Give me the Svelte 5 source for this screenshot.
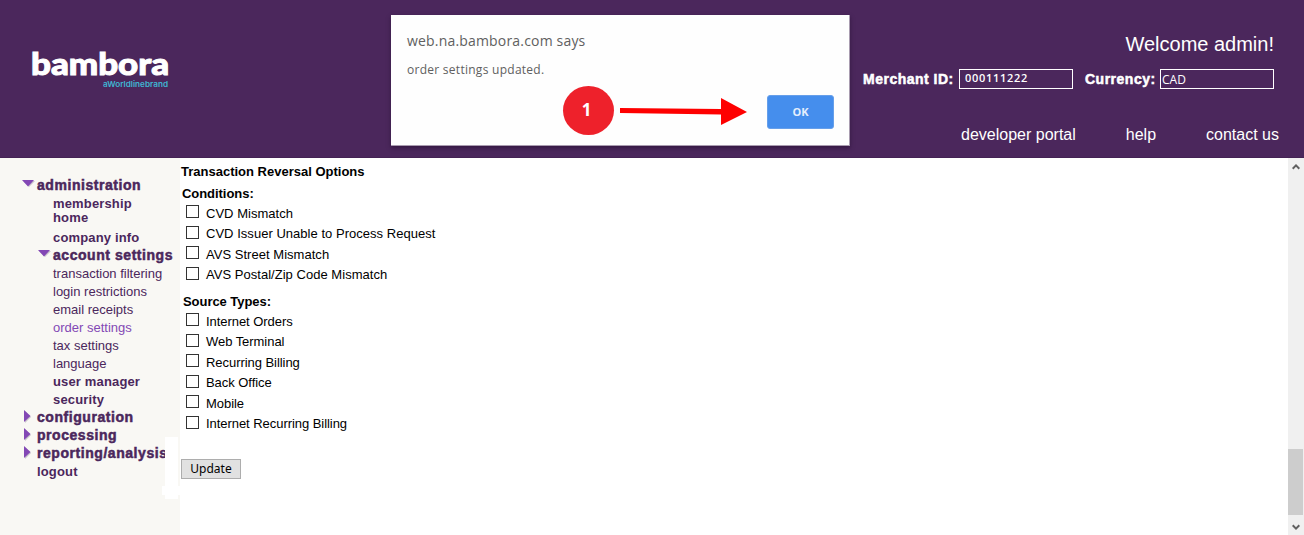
<script>
    const conditions = [
        'CVD Mismatch',
        'CVD Issuer Unable to Process Request',
        'AVS Street Mismatch',
        'AVS Postal/Zip Code Mismatch'
    ];

    const sourceTypes = [
        'Internet Orders',
        'Web Terminal',
        'Recurring Billing',
        'Back Office',
        'Mobile',
        'Internet Recurring Billing'
    ];

    const menu = [
        { label: 'administration', type: 'section', arrow: 'down' },
        { label: 'membership home', type: 'item wrap' },
        { label: 'company info', type: 'item' },
        { label: 'account settings', type: 'section nested', arrow: 'down' },
        { label: 'transaction filtering', type: 'sub' },
        { label: 'login restrictions', type: 'sub' },
        { label: 'email receipts', type: 'sub' },
        { label: 'order settings', type: 'sub active' },
        { label: 'tax settings', type: 'sub' },
        { label: 'language', type: 'sub' },
        { label: 'user manager', type: 'item' },
        { label: 'security', type: 'item' },
        { label: 'configuration', type: 'section', arrow: 'right' },
        { label: 'processing', type: 'section', arrow: 'right' },
        { label: 'reporting/analysis', type: 'section', arrow: 'right' },
        { label: 'logout', type: 'item outer' }
    ];

    let showDialog = true;

    function closeDialog() {
        showDialog = false;
    }
</script>

<div class="page">
    <header class="header">
        <svg class="logo" width="140" height="56" viewBox="0 -10 140 56">
            <text class="brand" x="0" y="26" textLength="138" lengthAdjust="spacingAndGlyphs">bambora</text>
            <text class="tagline" x="72" y="38" textLength="65" lengthAdjust="spacingAndGlyphs">aWorldlinebrand</text>
        </svg>
        <div class="account">
            <div class="welcome">Welcome admin!</div>
            <div class="fields">
                <span class="fieldLabel">Merchant ID:</span>
                <div class="field merchant">000111222</div>
                <span class="fieldLabel currency">Currency:</span>
                <div class="field">CAD</div>
            </div>
            <nav class="links">
                <a class="link" href="#portal">developer portal</a>
                <a class="link" href="#help">help</a>
                <a class="link" href="#contact">contact us</a>
            </nav>
        </div>
    </header>

    <div class="body">
        <aside class="sidebar">
            {#each menu as entry}
                <div class="entry {entry.type}">
                    {#if entry.arrow === 'down'}
                        <svg class="down" width="13" height="7" viewBox="0 0 13 7"><path d="M1 1H13L7 7Z" fill="#c9c4cc" /><path d="M0 0H12L6 6.5Z" fill="#8348b5" /></svg>
                    {:else if entry.arrow === 'right'}
                        <svg class="right" width="7" height="13" viewBox="0 0 7 13"><path d="M1 1L7 7L1 13Z" fill="#c9c4cc" /><path d="M0 0L6.5 6L0 12Z" fill="#8348b5" /></svg>
                    {/if}
                    <span>{entry.label}</span>
                </div>
            {/each}
            <div class="patch"></div>
        </aside>

        <main class="content">
            <h1 class="title">Transaction Reversal Options</h1>
            <h2 class="group">Conditions:</h2>
            <div class="options">
                {#each conditions as option}
                    <label class="option"><input type="checkbox" /><span>{option}</span></label>
                {/each}
            </div>
            <h2 class="group source">Source Types:</h2>
            <div class="options tight">
                {#each sourceTypes as option}
                    <label class="option"><input type="checkbox" /><span>{option}</span></label>
                {/each}
            </div>
            <button class="update">Update</button>
        </main>

        <div class="scrollbar">
            <svg width="8" height="6" viewBox="0 0 8 6"><path d="M.7 4.7L4 1.4L7.3 4.7" fill="none" stroke="#606060" stroke-width="2" /></svg>
            <div class="thumb"></div>
            <svg width="8" height="6" viewBox="0 0 8 6"><path d="M.7 1.3L4 4.6L7.3 1.3" fill="none" stroke="#606060" stroke-width="2" /></svg>
        </div>
    </div>

    {#if showDialog}
        <div class="dialog">
            <div class="dialogTitle">web.na.bambora.com says</div>
            <div class="dialogText">order settings updated.</div>
            <button class="ok" on:click={closeDialog}>OK</button>
        </div>
        <div class="badge">1</div>
        <svg class="pointer" width="128" height="30" viewBox="0 0 128 30">
            <path d="M0 11L101 12V1L127 15L101 28V17.5L0 16Z" fill="#fe0000" />
        </svg>
    {/if}
</div>

<style>
    :global(body) {
        margin: 0;
        overflow: hidden;
    }

    .page {
        position: relative;
        display: flex;
        flex-direction: column;
        width: 1304px;
        height: 535px;
        background-color: #fff;
        font-family: 'Liberation Sans', Arial, sans-serif;
        font-size: 13px;
    }

    .header {
        display: flex;
        justify-content: space-between;
        box-sizing: border-box;
        height: 158px;
        padding: 31px 25px 0 31px;
        background-color: #4b275c;
        border-bottom: 1px solid #442254;
        color: #fff;
    }

    .logo {
        margin-top: 8px;
    }

    .brand {
        font-family: Lato, sans-serif;
        font-size: 31px;
        font-weight: 900;
        fill: #fff;
        stroke: #fff;
        stroke-width: 1px;
    }

    .tagline {
        font-family: Inter, sans-serif;
        font-size: 8px;
        font-weight: 600;
        fill: #3fb6d3;
    }

    .account {
        display: flex;
        flex-direction: column;
        align-items: flex-end;
    }

    .welcome {
        margin-right: 5px;
        font-size: 20px;
        line-height: 26px;
    }

    .fields {
        display: flex;
        align-items: center;
        margin: 12px 5px 0 0;
        height: 20px;
    }

    .fieldLabel {
        width: 92px;
        margin-right: 4px;
        font-size: 14px;
        font-weight: bold;
        letter-spacing: 0.5px;
        white-space: nowrap;
        -webkit-text-stroke: 0.5px #fff;
    }

    .currency {
        width: 71px;
        margin-left: 12px;
    }

    .field {
        box-sizing: border-box;
        width: 114px;
        height: 20px;
        padding-left: 1px;
        border: 1px solid #fff;
        font-family: 'Open Sans', sans-serif;
        font-size: 12px;
        line-height: 20px;
    }

    .merchant {
        padding-left: 5px;
        font-size: 11px;
        font-weight: 600;
        line-height: 15px;
        letter-spacing: 0.7px;
    }

    .links {
        display: flex;
        gap: 50px;
        margin-top: 36px;
        font-size: 16px;
        line-height: 20px;
    }

    .link {
        color: #fff;
        text-decoration: none;
    }

    .body {
        display: flex;
        flex: 1;
    }

    .sidebar {
        position: relative;
        box-sizing: border-box;
        width: 180px;
        padding: 19px 0 0 37px;
        background-color: #f9f8f4;
        color: #4b275c;
    }

    .entry {
        position: relative;
        height: 18px;
        line-height: 18px;
        white-space: nowrap;
    }

    .section {
        font-size: 14px;
        font-weight: bold;
        letter-spacing: 0.55px;
        line-height: 17px;
        -webkit-text-stroke: 0.5px #4b275c;
    }

    .nested,
    .item,
    .sub {
        padding-left: 16px;
    }

    .item {
        font-weight: bold;
        letter-spacing: 0.15px;
    }

    .outer {
        padding-left: 0;
    }

    .wrap {
        box-sizing: border-box;
        width: 110px;
        height: 34px;
        padding-top: 2px;
        line-height: 14px;
        white-space: normal;
    }

    .active {
        color: #8348b5;
    }

    .down {
        position: absolute;
        left: -15px;
        top: 3px;
    }

    .nested .down {
        left: 1px;
    }

    .right {
        position: absolute;
        left: -13px;
        top: 1px;
    }

    .patch {
        position: absolute;
        left: 165px;
        top: 279px;
        width: 13px;
        height: 62px;
        background-color: #fff;
    }

    .patch::after {
        content: '';
        position: absolute;
        left: -3px;
        top: 49px;
        width: 18px;
        height: 9px;
        background-color: #fff;
    }

    .content {
        flex: 1;
        padding: 5px 0 0 1px;
        color: #000;
    }

    .title,
    .group {
        margin: 0;
        font-size: 13px;
        line-height: 17px;
    }

    .group {
        margin: 5px 0 0 1px;
        letter-spacing: -0.05px;
    }

    .source {
        margin: 9px 0 0 2px;
    }

    .options {
        display: grid;
        grid-auto-rows: 20.5px;
        margin-left: 5px;
        letter-spacing: 0.03px;
    }

    .tight {
        letter-spacing: -0.05px;
    }

    .option {
        display: flex;
        align-items: center;
        gap: 7px;
    }

    .option input {
        appearance: none;
        box-sizing: border-box;
        width: 13px;
        height: 13px;
        margin: 0 0 1px;
        border: 1px solid #333;
        background-color: #fff;
    }

    .option span {
        padding-top: 2px;
    }

    .update {
        width: 60px;
        height: 20px;
        margin-top: 26px;
        padding: 0;
        border: 1px solid #adadad;
        background-color: #e1e1e1;
        color: #000;
        font-family: 'Noto Sans', sans-serif;
        font-size: 12px;
        line-height: 18px;
    }

    .scrollbar {
        display: flex;
        flex-direction: column;
        align-items: center;
        box-sizing: border-box;
        width: 16px;
        padding: 6px 1px 5px 0;
        background-color: #f0f0f0;
    }

    .thumb {
        width: 15px;
        height: 66px;
        margin: auto 0 9px;
        background-color: #cdcdcd;
    }

    .dialog {
        position: absolute;
        left: 391px;
        top: 15px;
        display: flex;
        flex-direction: column;
        box-sizing: border-box;
        width: 459px;
        height: 131px;
        padding: 16px 15px 16px 16px;
        border: solid #a99cb0;
        border-width: 0 1px 1px 0;
        background-color: #fefefe;
        box-shadow: 0 2px 4px rgba(30, 10, 40, 0.5);
        color: #606060;
        font-family: 'Open Sans', sans-serif;
    }

    .dialogTitle {
        font-size: 14px;
        line-height: 20px;
        letter-spacing: 0.18px;
    }

    .dialogText {
        margin-top: 10px;
        font-size: 12px;
        line-height: 18px;
        letter-spacing: 0.27px;
    }

    .ok {
        align-self: flex-end;
        width: 67px;
        height: 34px;
        margin-top: auto;
        padding: 0 0 2px;
        border: 1px solid #669fea;
        border-radius: 3px;
        background-color: #458eed;
        color: #e4eefc;
        font-family: 'Open Sans', sans-serif;
        font-size: 11px;
        font-weight: 700;
    }

    .badge {
        position: absolute;
        left: 563px;
        top: 86px;
        width: 51px;
        height: 49px;
        border-radius: 50%;
        background-color: #ee212b;
        color: #fff;
        font-family: 'Noto Sans', sans-serif;
        font-size: 17px;
        font-weight: 700;
        line-height: 48px;
        text-align: center;
        text-indent: -4px;
    }

    .pointer {
        position: absolute;
        left: 620px;
        top: 97px;
    }
</style>
